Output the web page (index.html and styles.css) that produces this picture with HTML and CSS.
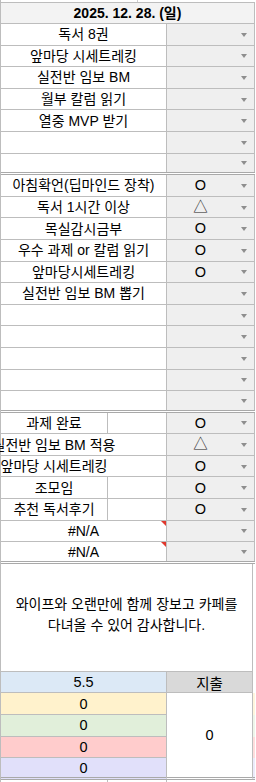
FILE: index.html
```html
<!DOCTYPE html>
<html lang="ko">
<head>
<meta charset="utf-8">
<link rel="stylesheet" href="styles.css">
</head>
<body>
<div class="sheet">
  <div class="strip-top"><div class="strip-cell"></div></div>
  <div class="row header"><div class="cell full">2025. 12. 28. (일)</div></div>

  <div class="sec">
    <div class="row"><div class="cell left">독서 8권</div><div class="cell drop"><span class="val"></span><i class="arrow"></i></div></div>
    <div class="row"><div class="cell left">앞마당 시세트레킹</div><div class="cell drop"><span class="val"></span><i class="arrow"></i></div></div>
    <div class="row"><div class="cell left">실전반 임보 BM</div><div class="cell drop"><span class="val"></span><i class="arrow"></i></div></div>
    <div class="row"><div class="cell left">월부 칼럼 읽기</div><div class="cell drop"><span class="val"></span><i class="arrow"></i></div></div>
    <div class="row"><div class="cell left">열중 MVP 받기</div><div class="cell drop"><span class="val"></span><i class="arrow"></i></div></div>
    <div class="row"><div class="cell left"></div><div class="cell drop"><span class="val"></span><i class="arrow"></i></div></div>
    <div class="row last"><div class="cell left"></div><div class="cell drop"><span class="val"></span><i class="arrow"></i></div></div>
  </div>

  <div class="sec">
    <div class="row"><div class="cell left">아침확언(딥마인드 장착)</div><div class="cell drop"><span class="val">O</span><i class="arrow"></i></div></div>
    <div class="row"><div class="cell left">독서 1시간 이상</div><div class="cell drop"><span class="val tri">△</span><i class="arrow"></i></div></div>
    <div class="row"><div class="cell left">목실감시금부</div><div class="cell drop"><span class="val">O</span><i class="arrow"></i></div></div>
    <div class="row"><div class="cell left">우수 과제 or 칼럼 읽기</div><div class="cell drop"><span class="val">O</span><i class="arrow"></i></div></div>
    <div class="row"><div class="cell left">앞마당시세트레킹</div><div class="cell drop"><span class="val">O</span><i class="arrow"></i></div></div>
    <div class="row"><div class="cell left">실전반 임보 BM 뽑기</div><div class="cell drop"><span class="val"></span><i class="arrow"></i></div></div>
    <div class="row"><div class="cell left"></div><div class="cell drop"><span class="val"></span><i class="arrow"></i></div></div>
    <div class="row"><div class="cell left"></div><div class="cell drop"><span class="val"></span><i class="arrow"></i></div></div>
    <div class="row"><div class="cell left"></div><div class="cell drop"><span class="val"></span><i class="arrow"></i></div></div>
    <div class="row"><div class="cell left"></div><div class="cell drop"><span class="val"></span><i class="arrow"></i></div></div>
    <div class="row last"><div class="cell left"></div><div class="cell drop"><span class="val"></span><i class="arrow"></i></div></div>
  </div>

  <div class="sec">
    <div class="row"><div class="cell ca">과제 완료</div><div class="cell cb"></div><div class="cell drop"><span class="val">O</span><i class="arrow"></i></div></div>
    <div class="row"><div class="cell ca ovf">실전반 임보 BM 적용</div><div class="cell cb"></div><div class="cell drop"><span class="val tri">△</span><i class="arrow"></i></div></div>
    <div class="row"><div class="cell ca ovf">앞마당 시세트레킹</div><div class="cell cb"></div><div class="cell drop"><span class="val">O</span><i class="arrow"></i></div></div>
    <div class="row"><div class="cell ca">조모임</div><div class="cell cb"></div><div class="cell drop"><span class="val">O</span><i class="arrow"></i></div></div>
    <div class="row"><div class="cell ca">추천 독서후기</div><div class="cell cb"></div><div class="cell drop"><span class="val">O</span><i class="arrow"></i></div></div>
    <div class="row"><div class="cell left err">#N/A</div><div class="cell drop"><span class="val"></span><i class="arrow"></i></div></div>
    <div class="row last"><div class="cell left err">#N/A</div><div class="cell drop"><span class="val"></span><i class="arrow"></i></div></div>
  </div>

  <div class="dsec">
    <div class="note-row">
      <div class="note">와이프와 오랜만에 함께 장보고 카페를<br>다녀올 수 있어 감사합니다.</div>
      <div class="sliver"></div>
    </div>
    <div class="budget">
      <div class="b b-blue">5.5</div>
      <div class="b b-head">지출</div>
      <div class="s"></div>
      <div class="b b-yellow">0</div>
      <div class="b b-total">0</div>
      <div class="s s-yellow"></div>
      <div class="b b-green">0</div>
      <div class="s s-green"></div>
      <div class="b b-red">0</div>
      <div class="s s-red"></div>
      <div class="b b-purple blast">0</div>
      <div class="s s-purple slast"></div>
    </div>
  </div>

  <div class="strip-bottom"><div class="sb-a"></div><div class="sb-b"></div></div>
</div>
</body>
</html>
```

FILE: styles.css
```css
* { box-sizing: border-box; }

html, body {
  margin: 0;
  padding: 0;
  background: #ffffff;
}

body {
  width: 256px;
  height: 782px;
  overflow: hidden;
  font-family: "Liberation Sans", "Noto Sans CJK KR", sans-serif;
  font-size: 14px;
  color: #000;
}

.sheet {
  width: 255px;
  border-left: 1px solid #bdbdbd;
}

.strip-top {
  height: 2px;
  display: flex;
}
.strip-cell {
  width: 137px;
  border-right: 1px solid #d0d0d0;
}

.row {
  display: flex;
  height: 21.6px;
  border-bottom: 1px solid #bdbdbd;
}
.row.last {
  border-bottom: 3px double #a9a9a9;
}

.header {
  height: 22px;
  border-top: 1px solid #bdbdbd;
  background: #f3f3f3;
}

.cell {
  display: flex;
  align-items: center;
  justify-content: center;
  white-space: nowrap;
  border-right: 1px solid #bdbdbd;
  line-height: 1;
}

.full {
  width: 254px;
  font-weight: bold;
}

.left {
  width: 166px;
  position: relative;
}

.drop {
  width: 88px;
  background: #efefef;
  justify-content: flex-start;
}
.val {
  width: 67px;
  text-align: center;
  font-size: 14.5px;
}
.val.tri {
  font-size: 14.5px;
  color: #222;
}
.arrow {
  width: 0;
  height: 0;
  margin-left: 7px;
  margin-top: 1px;
  border-left: 3px solid transparent;
  border-right: 3px solid transparent;
  border-top: 4px solid #8e8e8e;
}

.ca {
  width: 107px;
}
.ca.ovf {
  border-right: 1px solid transparent;
  overflow: visible;
}
.cb {
  width: 59px;
}

.err::after {
  content: "";
  position: absolute;
  top: 0;
  right: 0;
  width: 0;
  height: 0;
  border-top: 5px solid #e0382d;
  border-left: 5px solid transparent;
}

.dsec {
  width: 255px;
}

.note-row {
  display: flex;
  height: 108px;
}
.note {
  width: 252px;
  display: flex;
  align-items: center;
  justify-content: center;
  text-align: center;
  font-size: 14px;
  line-height: 21px;
  padding-bottom: 4px;
  border-right: 1px solid #bdbdbd;
  border-bottom: 1px solid #bdbdbd;
}
.sliver {
  flex: 1;
}

.budget {
  display: grid;
  grid-template-columns: 166px 86px 2px;
  grid-template-rows: repeat(5, 21.6px);
}
.b {
  display: flex;
  align-items: center;
  justify-content: center;
  border-right: 1px solid #bdbdbd;
  border-bottom: 1px solid #bdbdbd;
  font-size: 14.5px;
}
.b-blue { background: #dce9f6; }
.b-head { background: #d9d9d9; }
.b-yellow { background: #fff2cc; }
.b-green { background: #e1efda; }
.b-red { background: #ffcccc; }
.b-purple { background: #e1e0fa; }
.b-total {
  grid-column: 2;
  grid-row: 2 / span 4;
  background: #ffffff;
  border-bottom: 3px double #a9a9a9;
}
.blast { border-bottom: 3px double #a9a9a9; }

.s-yellow { background: #fff6dd; }
.s-green { background: #eef6ea; }
.s-red { background: #ffdddd; }
.s-purple { background: #ecebfb; }
.slast { border-bottom: 3px double #a9a9a9; }

.strip-bottom {
  display: flex;
  height: 3px;
}
.sb-a {
  width: 107px;
  border-right: 1px solid #bdbdbd;
}
.sb-b {
  width: 59px;
  border-right: 1px solid #bdbdbd;
}
```
